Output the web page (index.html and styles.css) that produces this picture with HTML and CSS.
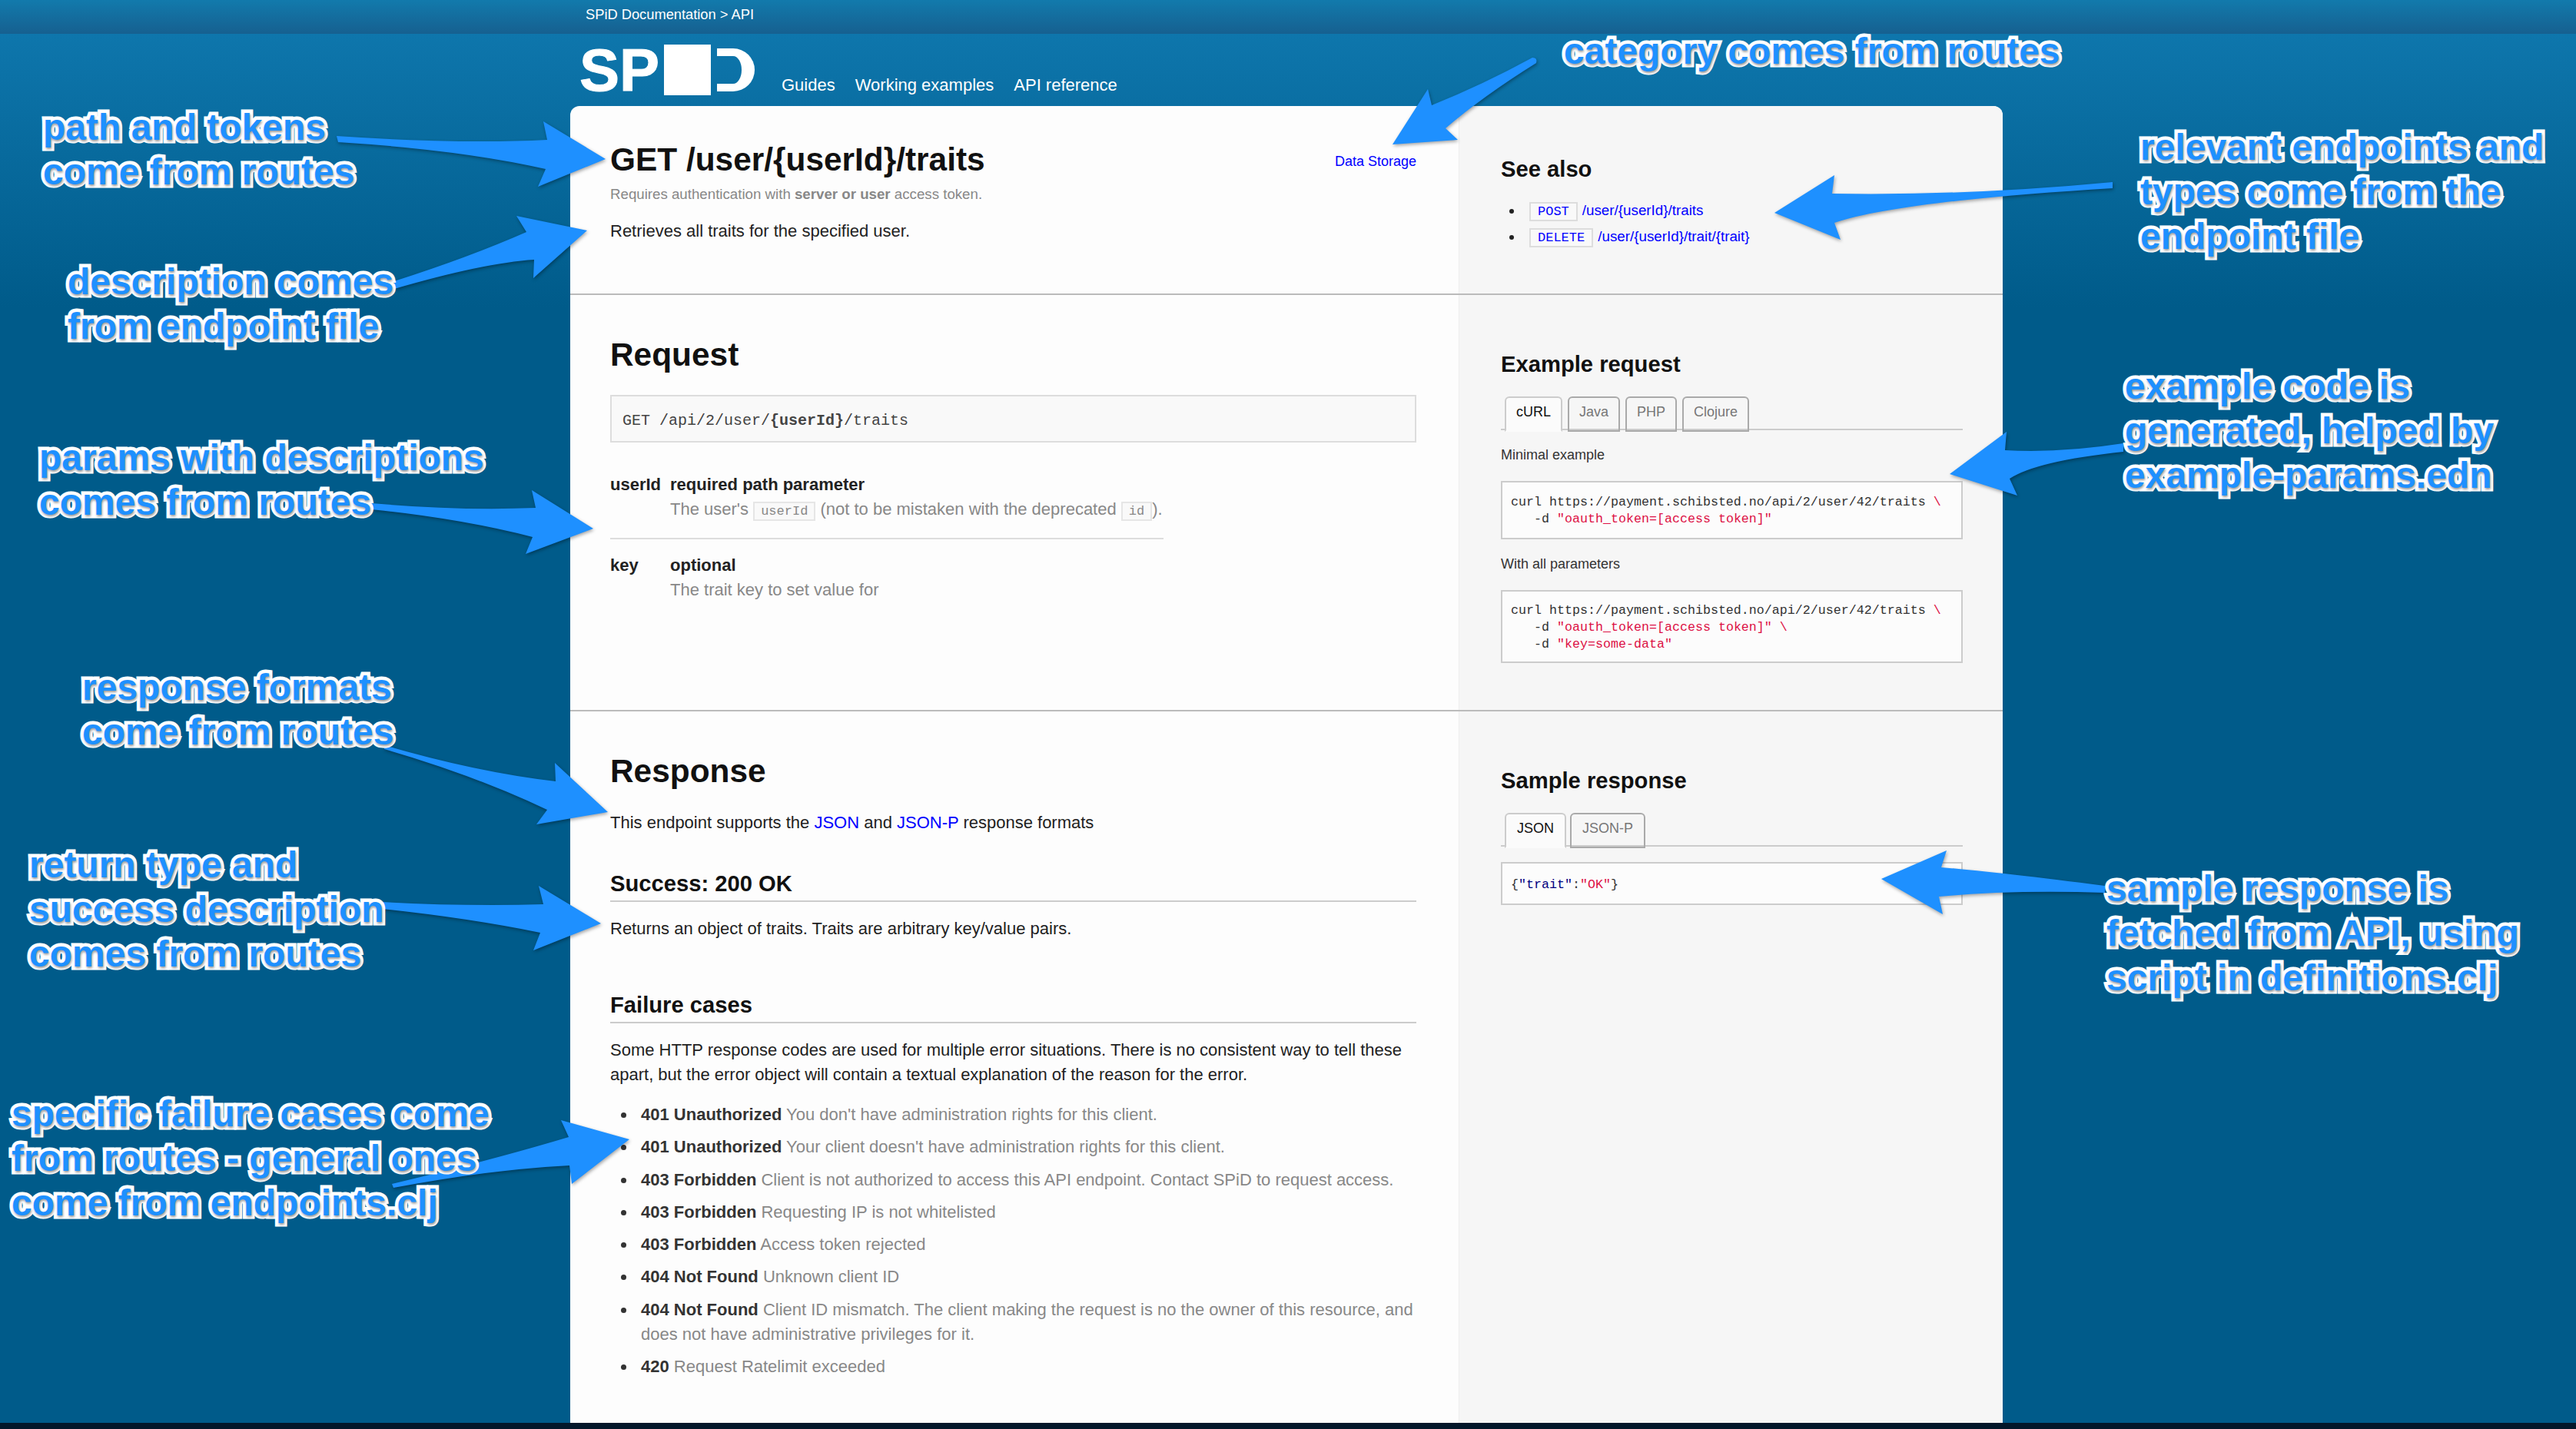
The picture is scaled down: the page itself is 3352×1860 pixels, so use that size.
FILE: index.html
```html
<!DOCTYPE html>
<html lang="en">
<head>
  <meta charset="UTF-8">
  <title>SPiD Documentation - API</title>
  <link rel="stylesheet" href="styles.css">
</head>
<body>

  <div class="topbar">SPiD Documentation &gt; API</div>

  <div class="header">
    <div class="logo">
      <span class="logo-text">SP</span>
      <span class="logo-square"></span>
      <span class="logo-d"></span>
    </div>
    <div class="nav">
      <a href="#">Guides</a>
      <a href="#">Working examples</a>
      <a href="#">API reference</a>
    </div>
  </div>

  <div class="card">

    <!-- Endpoint -->
    <div class="row row-intro">
      <div class="main">
        <div class="title-line">
          <h1>GET /user/{userId}/traits</h1>
          <a class="category" href="#">Data Storage</a>
        </div>
        <p class="auth">Requires authentication with <b>server or user</b> access token.</p>
        <p class="description">Retrieves all traits for the specified user.</p>
      </div>
      <div class="side">
        <h3>See also</h3>
        <ul class="see-also">
          <li><a href="#"><code class="method">POST</code>/user/{userId}/traits</a></li>
          <li><a href="#"><code class="method">DELETE</code>/user/{userId}/trait/{trait}</a></li>
        </ul>
      </div>
    </div>

    <!-- Request -->
    <div class="row row-request">
      <div class="main">
        <h2>Request</h2>
        <div class="path-box">GET /api/2/user/<b>{userId}</b>/traits</div>
        <div class="param param-first">
          <b>userId</b>
          <b>required path parameter</b>
          <span></span>
          <span class="muted">The user's <code>userId</code> (not to be mistaken with the deprecated <code>id</code>).</span>
        </div>
        <div class="param">
          <b>key</b>
          <b>optional</b>
          <span></span>
          <span class="muted">The trait key to set value for</span>
        </div>
      </div>
      <div class="side side-low">
        <h3>Example request</h3>
        <div class="tabs">
          <span class="tab tab-active">cURL</span>
          <span class="tab">Java</span>
          <span class="tab">PHP</span>
          <span class="tab">Clojure</span>
        </div>
        <p class="example-label">Minimal example</p>
        <pre class="code">curl https://payment.schibsted.no/api/2/user/42/traits <span class="str">\</span>
   -d <span class="str">"oauth_token=[access token]"</span></pre>
        <p class="example-label">With all parameters</p>
        <pre class="code code-tall">curl https://payment.schibsted.no/api/2/user/42/traits <span class="str">\</span>
   -d <span class="str">"oauth_token=[access token]"</span> <span class="str">\</span>
   -d <span class="str">"key=some-data"</span></pre>
      </div>
    </div>

    <!-- Response -->
    <div class="row row-response">
      <div class="main">
        <h2>Response</h2>
        <p class="formats">This endpoint supports the <a href="#">JSON</a> and <a href="#">JSON-P</a> response formats</p>
        <h4 class="success">Success: 200 OK</h4>
        <p class="returns">Returns an object of traits. Traits are arbitrary key/value pairs.</p>
        <h4 class="failure">Failure cases</h4>
        <p class="returns">Some HTTP response codes are used for multiple error situations. There is no consistent way to tell these apart, but the error object will contain a textual explanation of the reason for the error.</p>
        <ul class="failures">
          <li><b>401 Unauthorized</b> You don't have administration rights for this client.</li>
          <li><b>401 Unauthorized</b> Your client doesn't have administration rights for this client.</li>
          <li><b>403 Forbidden</b> Client is not authorized to access this API endpoint. Contact SPiD to request access.</li>
          <li><b>403 Forbidden</b> Requesting IP is not whitelisted</li>
          <li><b>403 Forbidden</b> Access token rejected</li>
          <li><b>404 Not Found</b> Unknown client ID</li>
          <li><b>404 Not Found</b> Client ID mismatch. The client making the request is no the owner of this resource, and does not have administrative privileges for it.</li>
          <li><b>420</b> Request Ratelimit exceeded</li>
        </ul>
      </div>
      <div class="side side-low">
        <h3>Sample response</h3>
        <div class="tabs">
          <span class="tab tab-active tab-json">JSON</span>
          <span class="tab tab-jsonp">JSON-P</span>
        </div>
        <pre class="code code-sample">{<span class="key">"trait"</span>:<span class="str">"OK"</span>}</pre>
      </div>
    </div>

  </div>

  <div class="footer"></div>

  <!-- Annotation arrows, drawn on top of the page -->
  <svg class="arrows" viewBox="0 0 3352 1860">
    <path d="M438 177 Q600 188 712 182 L707 158 L788 207 L700 243 L710 220 Q600 195 440 185 Z"/>
    <path d="M513 366 Q610 335 685 302 L672 281 L764 300 L694 362 L695 338 Q630 342 513 376 Z"/>
    <path d="M483 655 Q600 665 697 661 L692 638 L772 688 L684 721 L693 699 Q600 675 483 663 Z"/>
    <path d="M500 970 Q620 1005 723 1017 L722 993 L791 1057 L698 1073 L712 1054 Q620 1010 500 975 Z"/>
    <path d="M497 1174 Q610 1180 707 1177 L701 1153 L782 1202 L694 1237 L703 1214 Q610 1195 497 1183 Z"/>
    <path d="M510 1541 Q640 1510 740 1480 L730 1458 L819 1483 L744 1541 L741 1517 Q640 1522 512 1546 Z"/>
    <path d="M1994 75 Q1930 110 1863 137 L1858 116 L1812 188 L1897 182 L1881 167 Q1930 125 1999 82 Q2001 75 1994 75 Z"/>
    <path d="M2749 237 Q2560 255 2384 252 L2387 228 L2309 277 L2395 312 L2387 290 Q2470 262 2749 245 Z"/>
    <path d="M2763 577 Q2680 590 2609 586 L2611 562 L2537 617 L2625 645 L2615 623 Q2650 600 2763 588 Z"/>
    <path d="M2739 1153 Q2600 1135 2526 1129 L2533 1107 L2448 1144 L2528 1190 L2523 1167 Q2620 1158 2739 1162 Z"/>
  </svg>

  <!-- Annotation labels -->
  <div class="note note-path">path and tokens<br>come from routes</div>
  <div class="note note-desc">description comes<br>from endpoint file</div>
  <div class="note note-params">params with descriptions<br>comes from routes</div>
  <div class="note note-formats">response formats<br>come from routes</div>
  <div class="note note-return">return type and<br>success description<br>comes from routes</div>
  <div class="note note-failure">specific failure cases come<br>from routes - general ones<br>come from endpoints.clj</div>
  <div class="note note-category">category comes from routes</div>
  <div class="note note-relevant">relevant endpoints and<br>types come from the<br>endpoint file</div>
  <div class="note note-example">example code is<br>generated, helped by<br>example-params.edn</div>
  <div class="note note-sample">sample response is<br>fetched from API, using<br>script in definitions.clj</div>

</body>
</html>
```

FILE: styles.css
```css
html, body {
  margin: 0;
  height: 1860px;
  overflow: hidden;
}
body {
  position: relative;
  display: flex;
  flex-direction: column;
  font-family: "Liberation Sans", Arial, sans-serif;
  font-size: 22px;
  line-height: 32px;
  color: #222;
  background: #005b8a linear-gradient(#0e76ac 44px, #005b8a 400px) no-repeat;
}
p, h1, h2, h3, h4, ul, pre {
  margin: 0;
  padding: 0;
}
a {
  color: #00f;
  text-decoration: none;
}

/* top */
.topbar {
  height: 44px;
  padding: 2px 0 0 762px;
  box-sizing: border-box;
  font-size: 18.3px;
  line-height: 34px;
  color: #fff;
  background: linear-gradient(#127aac, #166090);
}
.header {
  display: flex;
  height: 94px;
  padding-left: 754px;
}
.logo {
  display: flex;
  margin-top: 14px;
  color: #fff;
}
.logo-text {
  font-size: 78px;
  font-weight: bold;
  line-height: 66px;
  width: 110px;
  -webkit-text-stroke: 1px #fff;
}
.logo-square {
  width: 61px;
  height: 66px;
  background: #fff;
}
.logo-d {
  width: 32px;
  height: 36px;
  margin: 5px 0 0 8px;
  border: solid #fff;
  border-width: 10px 17px 10px 0;
  border-radius: 0 28px 28px 0;
}
.nav {
  display: flex;
  gap: 26px;
  margin: 52px 0 0 35px;
  line-height: 30px;
}
.nav a {
  color: #fff;
}

/* card */
.card {
  flex: 1;
  display: flex;
  flex-direction: column;
  width: 1864px;
  margin-left: 742px;
  border-radius: 12px 12px 0 0;
  overflow: hidden;
  background: #fdfdfd;
}
.row {
  display: grid;
  grid-template-columns: 1156px 708px;
  border-bottom: 2px solid #bbb;
}
.row-intro {
  height: 244px;
}
.row-request {
  height: 540px;
}
.row-response {
  flex: 1;
  border-bottom: 0;
}
.main {
  padding: 53px 55px 0 52px;
}
.side {
  padding: 64px 52px 0 54px;
  border-left: 1px solid #eee;
  background: #f6f6f6;
}
.side-low {
  padding-top: 72px;
}
.row-intro .main {
  padding-top: 45px;
}

h1, h2 {
  font-size: 42.4px;
  line-height: 50px;
  color: #111;
}
h3 {
  font-size: 29.2px;
  line-height: 36px;
  color: #111;
}
h4 {
  font-size: 29.2px;
  line-height: 36px;
  padding-bottom: 4px;
  border-bottom: 2px solid #ccc;
  color: #111;
}
.title-line {
  display: flex;
  justify-content: space-between;
}
.category {
  font-size: 18px;
  line-height: 24px;
  margin-top: 15px;
}
.auth {
  margin-top: 8px;
  font-size: 18.7px;
  line-height: 24px;
  color: #888;
}
.description {
  margin-top: 20px;
}

/* see also */
.see-also {
  margin-top: 19px;
  padding-left: 29px;
  font-size: 18.8px;
  line-height: 34px;
}
.see-also li {
  padding-left: 8px;
}
.method {
  display: inline-block;
  padding: 0 9px;
  margin-right: 6px;
  font-family: "Liberation Mono", monospace;
  font-size: 17px;
  line-height: 21px;
  border: 2px solid #ddd;
  background: #f9f9f9;
}

/* request */
.path-box {
  margin-top: 27px;
  padding: 19px 14px 13px;
  font-family: "Liberation Mono", monospace;
  font-size: 20px;
  line-height: 26px;
  color: #444;
  background: #f9f9f9;
  border: 2px solid #ddd;
}
.param {
  display: grid;
  grid-template-columns: 78px 1fr;
  width: 720px;
  padding-top: 18px;
}
.param-first {
  margin-top: 39px;
  padding: 0 0 21px;
  border-bottom: 2px solid #ddd;
}
.muted {
  color: #888;
}
.muted code {
  display: inline-block;
  padding: 0 8px;
  font-family: "Liberation Mono", monospace;
  font-size: 17px;
  line-height: 21px;
  border: 2px solid #e6e6e6;
  background: #f9f9f9;
}

/* tabs and examples */
.tabs {
  display: flex;
  gap: 7px;
  height: 42px;
  margin-top: 24px;
  padding-left: 5px;
  border-bottom: 2px solid #ccc;
}
.tab {
  height: 30px;
  padding: 6px 13px 6px;
  font-size: 18px;
  line-height: 24px;
  color: #777;
  border: 2px solid #aaa;
  border-radius: 6px 6px 0 0;
}
.tab-active {
  color: #111;
  background: #fbfbfb;
  border-color: #ccc;
  border-bottom: 2px solid #fbfbfb;
}
.tab-json {
  padding: 6px 14px 6px;
}
.tab-jsonp {
  padding: 6px 14px 6px;
  margin-left: -2px;
}
.example-label {
  margin-top: 20px;
  font-size: 18px;
  line-height: 24px;
  color: #333;
}
.code {
  margin-top: 22px;
  padding: 15px 11px 13px;
  font-family: "Liberation Mono", monospace;
  font-size: 16.67px;
  line-height: 22px;
  color: #333;
  background: #fcfcfc;
  border: 2px solid #ccc;
}
.code-tall {
  padding: 14px 11px 11px;
}
.code-sample {
  margin-top: 20px;
  padding: 17px 11px 13px;
}
.str {
  color: #d14;
}
.key {
  color: #000080;
}

/* response */
.formats {
  margin-top: 26px;
}
.success {
  margin-top: 45px;
}
.failure {
  margin-top: 65px;
}
.returns {
  margin-top: 19px;
}
.failures {
  margin-top: 20px;
  padding-left: 34px;
  color: #888;
}
.failures li {
  padding-left: 6px;
  margin-bottom: 10.3px;
}
.failures li::marker {
  color: #333;
}
.failures b {
  color: #333;
}

.footer {
  height: 8px;
  background: #03172a;
}

/* annotations */
.arrows {
  position: absolute;
  left: 0;
  top: 0;
  width: 3352px;
  height: 1860px;
  fill: #1e90ff;
  filter: drop-shadow(1px 2px 2px rgba(0, 0, 0, .35));
}
.note {
  position: absolute;
  font-size: 48px;
  font-weight: bold;
  line-height: 58px;
  white-space: nowrap;
  color: #1e90ff;
  -webkit-text-stroke: 9px #fff;
  paint-order: stroke fill;
  text-shadow: 1px 2px 3px rgba(0, 0, 0, .4);
}
.note-path { left: 56px; top: 137px; }
.note-desc { left: 88px; top: 338px; }
.note-params { left: 51px; top: 567px; }
.note-formats { left: 107px; top: 866px; }
.note-return { left: 38px; top: 1097px; }
.note-failure { left: 15px; top: 1421px; }
.note-category { left: 2035px; top: 38px; }
.note-relevant { left: 2785px; top: 163px; }
.note-example { left: 2765px; top: 474px; }
.note-sample { left: 2741px; top: 1128px; }
```
